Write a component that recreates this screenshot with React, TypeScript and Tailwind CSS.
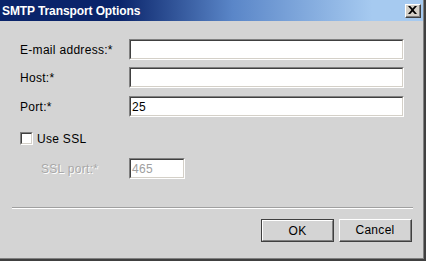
import React from 'react';

const sunken =
  'border-t border-l border-t-[#808080] border-l-[#808080] border-b border-r border-b-white border-r-white';
const sunkenInner =
  'border-t border-l border-t-[#404040] border-l-[#404040] border-b border-r border-b-[#d4d0c8] border-r-[#d4d0c8]';

const TextField: React.FC<{ value?: string; width: string; disabled?: boolean }> = ({ value, width, disabled }) => (
  <div className={`${sunken} ${width} h-[21px]`}>
    <div className={`${sunkenInner} w-full h-full bg-white flex items-center pl-[1px]`}>
      <span className={`text-[12px] leading-none tracking-[0.3px] ${disabled ? 'text-[#a0a0a0]' : 'text-black'}`}>{value}</span>
    </div>
  </div>
);

const Button: React.FC<{ label: string; isDefault?: boolean }> = ({ label, isDefault }) => (
  <div
    className={`w-[73px] h-[23px] ${
      isDefault ? 'border border-[#404040]' : 'border-t border-l border-t-white border-l-white border-b border-r border-b-[#404040] border-r-[#404040]'
    }`}
  >
    <div
      className={`w-full h-full flex items-center justify-center border-b border-r border-b-[#808080] border-r-[#808080] ${
        isDefault ? 'border-t border-l border-t-white border-l-white' : ''
      }`}
    >
      <span className="text-[12px] text-black leading-none tracking-[0.3px]">{label}</span>
    </div>
  </div>
);

export default function App() {
  return (
    <div className="w-[441px] h-[261px] bg-white" style={{ fontFamily: '"Liberation Sans", Arial, sans-serif' }}>
      <div className="w-[426px] h-[261px] border-r-2 border-b-2 border-[#404040]">
        <div className="w-full h-full bg-[#d4d4d4] border-r border-b border-[#808080] flex flex-col">
          {/* title bar */}
          <div className="h-[21px] bg-[linear-gradient(to_right,#0a246a_28%,#5a86c8_55%,#a6caf0_88%)] flex items-center justify-between pl-[2px] pr-[2px]">
            <span className="text-white font-bold text-[12px] leading-none tracking-[-0.1px]">SMTP Transport Options</span>
            <div className="w-[16px] h-[14px] border-t border-l border-t-white border-l-white border-b border-r border-b-[#404040] border-r-[#404040]">
              <div className="w-full h-full bg-[#d4d0c8] border-b border-r border-b-[#808080] border-r-[#808080] flex items-center justify-center">
                <svg width="9" height="8" viewBox="0 0 9 8">
                  <path d="M0 0h2.2l2.3 2.6L6.8 0H9L5.6 4 9 8H6.8L4.5 5.4 2.2 8H0l3.4-4z" fill="#000" />
                </svg>
              </div>
            </div>
          </div>

          {/* form */}
          <div className="pl-[20px] pt-[18px] flex flex-col text-[12px] tracking-[0.3px]">
            <div className="flex items-center">
              <span className="w-[109px] text-black">E-mail address:*</span>
              <TextField width="w-[275px]" />
            </div>
            <div className="flex items-center mt-[7px]">
              <span className="w-[109px] text-black">Host:*</span>
              <TextField width="w-[275px]" />
            </div>
            <div className="flex items-center mt-[8px]">
              <span className="w-[109px] text-black">Port:*</span>
              <TextField width="w-[275px]" value="25" />
            </div>
            <div className="flex items-center mt-[15px] h-[13px]">
              <div className={`${sunken} w-[13px] h-[13px]`}>
                <div className={`${sunkenInner} w-full h-full bg-white`} />
              </div>
              <span className="ml-[4px] text-black">Use SSL</span>
            </div>
            <div className="flex items-center mt-[13px]">
              <span className="w-[109px] pl-[21px] text-[#a8a8a8] [text-shadow:1px_1px_0_#ffffff]">SSL port:*</span>
              <TextField width="w-[56px]" value="465" disabled />
            </div>
          </div>

          {/* separator */}
          <div className="ml-[12px] mt-[28px] w-[401px]">
            <div className="h-px bg-[#a0a0a0]" />
            <div className="h-px bg-white" />
          </div>

          {/* buttons */}
          <div className="mt-[10px] ml-[261px] flex gap-[5px]">
            <Button label="OK" isDefault />
            <Button label="Cancel" />
          </div>
        </div>
      </div>
    </div>
  );
}
